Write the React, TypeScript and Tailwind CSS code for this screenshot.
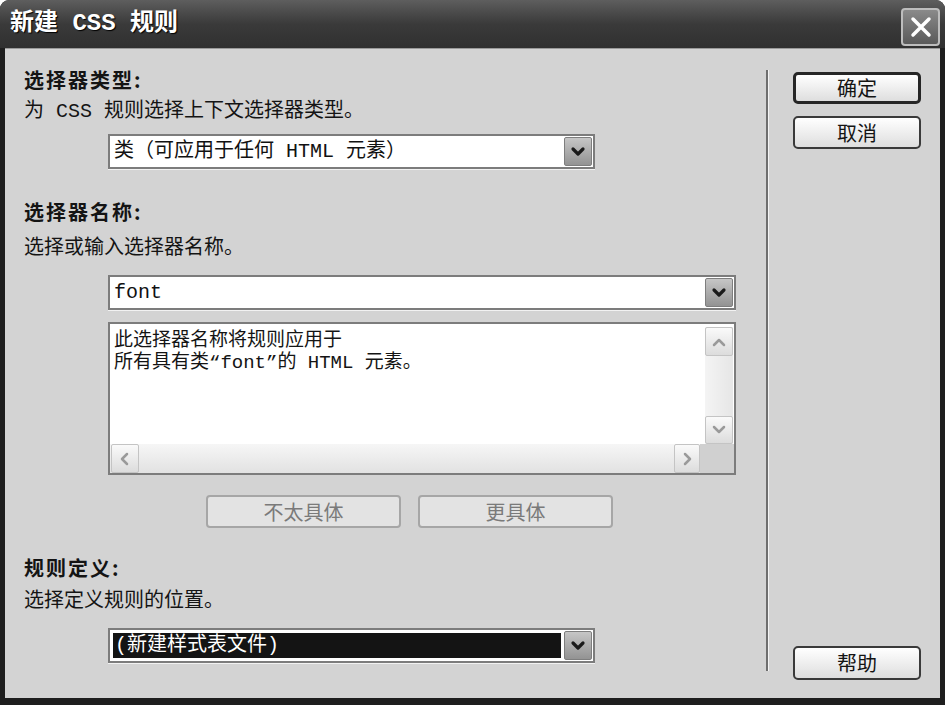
import React from "react";

const CJK = { fontFamily: '"Liberation Mono", "Noto Sans CJK SC", monospace' } as React.CSSProperties;
const CJKB = { fontFamily: '"Noto Sans CJK SC", "Noto Sans", sans-serif' } as React.CSSProperties;

function Chevron({ dir = "down", color = "#1a1a1a", size = 14, sw = 3 }: { dir?: "down" | "up" | "left" | "right"; color?: string; size?: number; sw?: number }) {
  const pts: Record<string, string> = {
    down: "3,5 8,10 13,5",
    up: "3,11 8,6 13,11",
    left: "10,3 5,8 10,13",
    right: "6,3 11,8 6,13",
  };
  return (
    <svg width={size} height={size} viewBox="0 0 16 16">
      <polyline points={pts[dir]} fill="none" stroke={color} strokeWidth={sw} strokeLinecap="round" strokeLinejoin="round" />
    </svg>
  );
}

function ArrowBtn() {
  return (
    <div className="w-[28px] self-stretch my-[1px] mr-[1px] flex items-center justify-center rounded-[2px] border border-[#7e7e7e] bg-gradient-to-b from-[#c6c6c6] to-[#939393]">
      <Chevron size={16} sw={3.2} />
    </div>
  );
}

function Select({ width, children, dark = false }: { width: string; children: React.ReactNode; dark?: boolean }) {
  return (
    <div className={`${width} h-[35px] ml-[84px] flex border-2 border-[#7c7c7c] bg-white shadow-[0_1px_0_#f2f2f2]`}>
      <div className={`flex-1 flex items-center ${dark ? "m-[3px] bg-[#141414] text-white" : "pl-[4px] text-[#111]"}`}>
        {children}
      </div>
      <ArrowBtn />
    </div>
  );
}

function ScrollBtn({ dir, cls }: { dir: "up" | "down" | "left" | "right"; cls: string }) {
  return (
    <div className={`${cls} flex items-center justify-center rounded-[2px] border border-[#c4c4c4] bg-gradient-to-b from-[#fafafa] to-[#dcdcdc]`}>
      <Chevron dir={dir} color="#9a9a9a" size={16} sw={2.5} />
    </div>
  );
}

export default function App() {
  return (
    <div className="w-[945px] h-[705px] bg-white overflow-hidden">
      <div className="w-full h-full flex flex-col rounded-t-[9px] overflow-hidden bg-[#1e1e1e]">
        {/* title bar */}
        <div className="h-[48px] shrink-0 flex items-center justify-between pl-[10px] pr-[5px] bg-gradient-to-b from-[#5e5e5e] via-[#3a3a3a] to-[#303030]">
          <span className="text-white text-[24px] font-bold leading-none [text-shadow:1px_1px_1px_#000]" style={CJK}>
            新建 CSS 规则
          </span>
          <div className="w-[39px] h-[38px] mt-[6px] flex items-center justify-center rounded-[4px] border-2 border-[#bdbdbd] bg-gradient-to-b from-[#8a8a8a] to-[#5a5a5a]">
            <svg width="24" height="24" viewBox="0 0 24 24">
              <path d="M4 4 L20 20 M20 4 L4 20" stroke="#ffffff" strokeWidth="3.5" strokeLinecap="round" />
            </svg>
          </div>
        </div>

        {/* body */}
        <div className="flex-1 mx-[5px] mb-[7px] bg-[#d3d3d3] border-t border-[#9a9a9a] flex text-[#141414]">
          {/* left column */}
          <div className="w-[761px] pl-[19px] pt-[19px] flex flex-col">
            <div className="text-[20px] font-bold leading-[24px] tracking-[2px]" style={CJKB}>选择器类型:</div>
            <div className="mt-[8px] text-[20px] leading-[24px]" style={CJK}>为 CSS 规则选择上下文选择器类型。</div>
            <div className="mt-[10px]">
              <Select width="w-[487px]">
                <span className="text-[20px] leading-none" style={CJK}>类（可应用于任何 HTML 元素）</span>
              </Select>
            </div>

            <div className="mt-[31px] text-[20px] font-bold leading-[24px] tracking-[2px]" style={CJKB}>选择器名称:</div>
            <div className="mt-[13px] text-[20px] leading-[24px]" style={CJK}>选择或输入选择器名称。</div>
            <div className="mt-[14px]">
              <Select width="w-[628px]">
                <span className="text-[20px] leading-none" style={CJK}>font</span>
              </Select>
            </div>

            {/* textarea */}
            <div className="mt-[12px] ml-[84px] w-[628px] h-[153px] border-2 border-[#7c7c7c] bg-white flex flex-col">
              <div className="flex-1 flex min-h-0">
                <div className="flex-1 pl-[4px] pt-[6px] text-[19px] leading-[22px]" style={CJK}>
                  <div>此选择器名称将规则应用于</div>
                  <div>所有具有类“font”的 HTML 元素。</div>
                </div>
                <div className="w-[28px] mr-[1px] mt-[3px] flex flex-col bg-gradient-to-r from-[#f4f4f4] to-[#e6e6e6]">
                  <ScrollBtn dir="up" cls="h-[29px]" />
                  <div className="flex-1" />
                  <ScrollBtn dir="down" cls="h-[28px]" />
                </div>
              </div>
              <div className="h-[29px] flex">
                <div className="flex-1 flex pl-[1px] bg-gradient-to-b from-[#f6f6f6] to-[#e2e2e2]">
                  <ScrollBtn dir="left" cls="w-[28px]" />
                  <div className="flex-1" />
                  <ScrollBtn dir="right" cls="w-[26px]" />
                </div>
                <div className="w-[34px] bg-[#d0d0d0]" />
              </div>
            </div>

            {/* specificity buttons */}
            <div className="mt-[20px] ml-[182px] flex gap-[17px]">
              <div className="w-[195px] h-[33px] flex items-center justify-center rounded-[4px] border-2 border-[#a6a6a6] bg-[#e3e3e3] text-[#7a7a7a] text-[20px]" style={CJKB}>不太具体</div>
              <div className="w-[195px] h-[33px] flex items-center justify-center rounded-[4px] border-2 border-[#a6a6a6] bg-[#e3e3e3] text-[#7a7a7a] text-[20px]" style={CJKB}>更具体</div>
            </div>

            <div className="mt-[28px] text-[20px] font-bold leading-[24px] tracking-[2px]" style={CJKB}>规则定义:</div>
            <div className="mt-[10px] text-[20px] leading-[24px]" style={CJK}>选择定义规则的位置。</div>
            <div className="mt-[14px]">
              <Select width="w-[487px]" dark>
                <span className="pl-[2px] text-[20px] leading-none" style={CJK}>(新建样式表文件)</span>
              </Select>
            </div>
          </div>

          {/* divider */}
          <div className="mt-[21px] mb-[27px] w-[3px] border-l-2 border-[#6e6e6e] border-r border-r-[#f4f4f4]" />

          {/* right column */}
          <div className="flex-1 pl-[24px] pt-[23px] pb-[18px] flex flex-col">
            <div className="w-[128px] h-[32px] flex items-center justify-center rounded-[5px] border-[3px] border-[#262626] bg-gradient-to-b from-[#ffffff] to-[#dedede] text-[20px]" style={CJKB}>确定</div>
            <div className="mt-[12px] w-[128px] h-[33px] flex items-center justify-center rounded-[5px] border-2 border-[#3a3a3a] bg-gradient-to-b from-[#ffffff] to-[#dedede] text-[20px]" style={CJKB}>取消</div>
            <div className="flex-1" />
            <div className="w-[128px] h-[34px] flex items-center justify-center rounded-[5px] border-2 border-[#3a3a3a] bg-gradient-to-b from-[#ffffff] to-[#dedede] text-[20px]" style={CJKB}>帮助</div>
          </div>
        </div>
      </div>
    </div>
  );
}
